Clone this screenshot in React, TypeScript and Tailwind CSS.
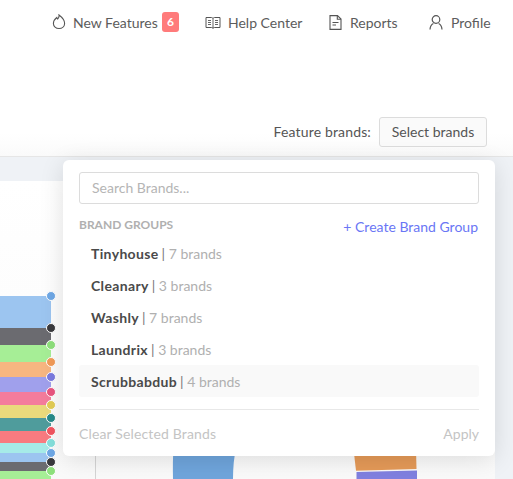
const bands = [
  { h: "h-[32px]", bg: "bg-[#9cc5f0]", dot: "bg-[#6fa8e6]" },
  { h: "h-[17px]", bg: "bg-[#6b6b70]", dot: "bg-[#3a3a3e]" },
  { h: "h-[17px]", bg: "bg-[#a6ee96]", dot: "bg-[#8ee07c]" },
  { h: "h-[15px]", bg: "bg-[#f7b681]", dot: "bg-[#f29b58]" },
  { h: "h-[15px]", bg: "bg-[#a0a0ec]", dot: "bg-[#7b7be0]" },
  { h: "h-[13px]", bg: "bg-[#f47c9c]", dot: "bg-[#ea5580]" },
  { h: "h-[13px]", bg: "bg-[#eada7c]", dot: "bg-[#e3cd55]" },
  { h: "h-[13px]", bg: "bg-[#4f9c9c]", dot: "bg-[#268a8a]" },
  { h: "h-[12px]", bg: "bg-[#f97b80]", dot: "bg-[#f25560]" },
  { h: "h-[10px]", bg: "bg-[#a6ebe8]", dot: "bg-[#85e0dc]" },
  { h: "h-[9px]", bg: "bg-[#9cc5f0]", dot: "bg-[#6fa8e6]" },
  { h: "h-[9px]", bg: "bg-[#6b6b70]", dot: "bg-[#3a3a3e]" },
  { h: "h-[9px]", bg: "bg-[#a6ee96]", dot: "bg-[#8ee07c]" },
];

const groups = [
  { name: "Tinyhouse", count: 7 },
  { name: "Cleanary", count: 3 },
  { name: "Washly", count: 7 },
  { name: "Laundrix", count: 3 },
  { name: "Scrubbabdub", count: 4, active: true },
];

function Flame() {
  return (
    <svg width="14" height="16" viewBox="0 0 14 16" fill="none" stroke="#555" strokeWidth="1.1">
      <path d="M7 1c.4 2.200-.6 3.200-1.300 4C5.200 4.500 4.900 4 4.800 3.500 3 4.900 1.400 7 1.400 9.500c0 2.900 2.500 5 5.600 5s5.600-2.100 5.600-5C12.600 6 9.700 3 7 1z" />
    </svg>
  );
}

function Book() {
  return (
    <svg width="16" height="14" viewBox="0 0 16 14" fill="none" stroke="#555" strokeWidth="1">
      <path d="M1 1.500h5.500c.8 0 1.500.5 1.500 1.200 0-.7.7-1.200 1.500-1.200H15v10H9.500c-.8 0-1.500.3-1.500 1 0-.7-.7-1-1.500-1H1z" />
      <path d="M8 3v9M3 4.500h3M3 6.500h3M3 8.500h3M10 4.500h3M10 6.500h3M10 8.500h3" strokeWidth=".9" />
    </svg>
  );
}

function Doc() {
  return (
    <svg width="13" height="15" viewBox="0 0 13 15" fill="none" stroke="#555" strokeWidth="1.1">
      <path d="M1 .6h7.500L12 4v10.400H1z" />
      <path d="M8.300.6v3.600H12M3.500 7.500h6M3.500 10h3.500" />
    </svg>
  );
}

function Person() {
  return (
    <svg width="14" height="15" viewBox="0 0 14 15" fill="none" stroke="#555" strokeWidth="1.2">
      <circle cx="7" cy="4.500" r="3.800" />
      <path d="M1 14.500c.2-3 1.800-5.200 3.400-6M13 14.500c-.2-3-1.800-5.200-3.400-6" />
    </svg>
  );
}

export default function App() {
  return (
    <div className="flex h-[479px] w-[513px] flex-col overflow-hidden bg-white font-['Lato',sans-serif] text-[14px] text-[#555]">
      <nav className="flex h-[44px] shrink-0 items-center whitespace-nowrap pl-[52px] text-[#5c5c5c]">
        <span className="flex items-center">
          <Flame />
          <span className="ml-[7px] w-[85px]">New Features</span>
          <span className="ml-[4px] flex h-5 w-[17px] items-center justify-center rounded-[3px] bg-[#ff7b7b] text-[12px] font-bold text-white">6</span>
        </span>
        <span className="ml-[26px] flex items-center gap-[7px] pt-[1px]">
          <Book />
          <span className="w-[74px]">Help Center</span>
        </span>
        <span className="ml-[27px] flex items-center gap-[8px]">
          <Doc />
          <span className="w-[48px]">Reports</span>
        </span>
        <span className="ml-[31px] flex items-center gap-[8px]">
          <Person />
          <span>Profile</span>
        </span>
      </nav>

      <div className="flex h-[113px] shrink-0 items-end justify-end gap-2 border-b border-[#e6e6e6] bg-gradient-to-b from-white from-80% to-[#fafafa] pr-[26px] pb-[9px]">
        <span className="mb-[5px] tracking-[0.15px]">Feature brands:</span>
        <button className="h-[30px] w-[108px] rounded-[3px] border border-[#dcdcdc] bg-[#fafafa] pb-[2px] text-[14px] text-[#555]">Select brands</button>
      </div>

      <main className="relative flex-1 bg-[#eff2f6] pt-6">
        <div className="relative h-full w-[495px] bg-gradient-to-b from-white to-[#fafafa]">
          <div className="absolute left-0 top-[115px] flex w-[51px] flex-col">
            {bands.map((b, i) => (
              <div key={i} className={`relative ${b.h} ${b.bg}`}>
                <span className={`absolute -right-[5px] -top-[5px] h-[10px] w-[10px] rounded-full border border-white ${b.dot}`} />
              </div>
            ))}
          </div>
          <div className="absolute bottom-0 left-[95px] top-[250px] w-px bg-[#d5d5d5]" />
          <svg className="absolute bottom-0 left-0" width="495" height="30" viewBox="0 0 495 30">
            <path d="M173.500 0C172.800 8 172.800 18 173 30H233C233 18 234 8 236 0z" fill="#6fa5dc" />
            <path d="M353.500 0L356 21.700L416.500 20L416 0z" fill="#e59a58" />
            <path d="M356.500 23L417 21.500V30H356.500z" fill="#8080e0" />
          </svg>
        </div>

        <div className="absolute left-[63px] top-[3px] flex h-[296px] w-[432px] flex-col rounded-[6px] bg-white px-4 pt-3 shadow-[0_4px_24px_rgba(0,0,0,0.12)]">
          <input
            placeholder="Search Brands..."
            className="h-[32px] w-full shrink-0 rounded-[3px] border border-[#dcdcdc] px-3 pb-[2px] text-[14px] outline-none placeholder:text-[#b5b5b5]"
          />
          <div className="mt-[9px] flex h-[21px] shrink-0 items-start justify-between">
            <span className="mt-[3px] text-[12px] font-bold text-[#b0b0b0]">BRAND GROUPS</span>
            <span className="mt-[3px] pr-px text-[14px] text-[#6a76f5]">+ Create Brand Group</span>
          </div>
          <ul className="mt-[3px] flex flex-col">
            {groups.map((g) => (
              <li key={g.name} className={`flex h-8 items-center rounded-[3px] px-3 ${g.active ? "bg-[#f9f9f9]" : ""}`}>
                <span className="font-bold tracking-[0.35px] text-[#4a4a4a]">{g.name}</span>
                <span className="ml-[3px] text-[#b0b0b0]"><span className="text-[#777]">|</span> {g.count} brands</span>
              </li>
            ))}
          </ul>
          <div className="mt-[12px] flex flex-1 items-start justify-between border-t border-[#e8e8e8] pt-[13px] text-[#c4c4c4]">
            <span className="tracking-[0.15px]">Clear Selected Brands</span>
            <span>Apply</span>
          </div>
        </div>
      </main>
    </div>
  );
}
